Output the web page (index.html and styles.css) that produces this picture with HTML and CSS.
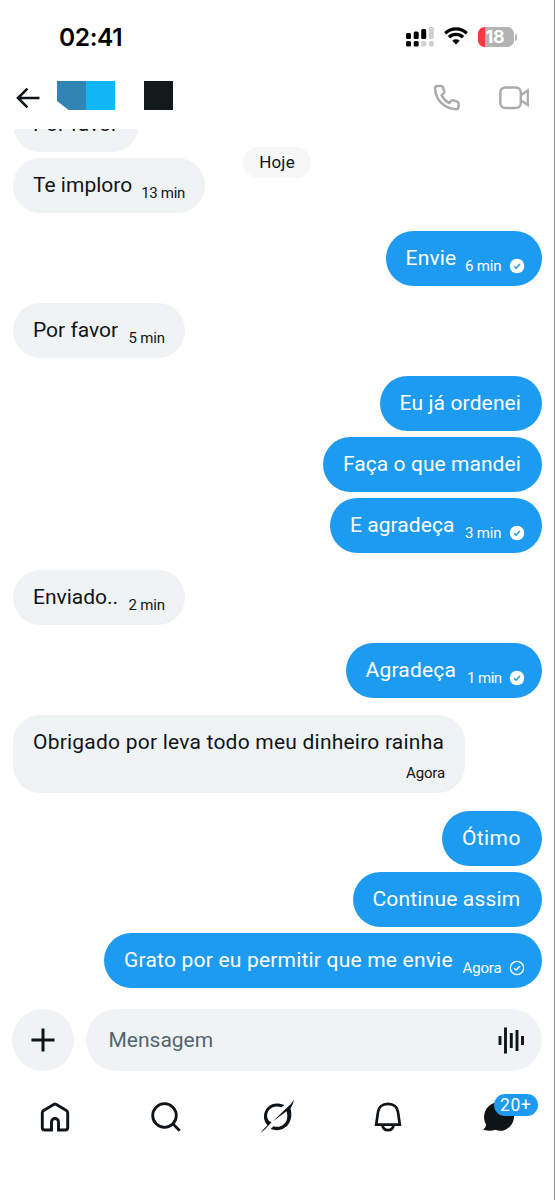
FILE: index.html
```html
<!DOCTYPE html>
<html lang="pt-BR">
<head>
<meta charset="utf-8">
<title>Mensagens</title>
<link rel="stylesheet" href="styles.css">
</head>
<body>
<main class="phone">
  <div class="status">
    <div class="clock">02:41</div>
    <svg class="signal" width="28" height="20" viewBox="0 0 28 20">
      <g fill="#000"><rect x="0" y="6" width="5" height="6" rx="1.5"/><rect x="7.7" y="4.5" width="5" height="7.5" rx="1.5"/><rect x="15.2" y="2" width="5" height="10" rx="1.5"/><rect x="0" y="14" width="5" height="5.5" rx="1.5"/><rect x="7.7" y="14" width="5" height="5.5" rx="1.5"/></g>
      <g fill="#d0d0d0"><rect x="22.8" y="0" width="5" height="12" rx="1.5"/><rect x="15.2" y="14" width="5" height="5.5" rx="1.5"/><rect x="22.8" y="14" width="5" height="5.5" rx="1.5"/></g>
    </svg>
    <svg class="wifi" width="24" height="18" viewBox="0 0 24 18">
      <path d="M1.2 6.2a15.6 15.6 0 0 1 21.6 0M5 10.2a10 10 0 0 1 14 0" fill="none" stroke="#000" stroke-width="3.3"/>
      <path d="M12 17.6l-3.7-3.8a5.4 5.4 0 0 1 7.4 0z"/>
    </svg>
    <div class="battery"><span>18</span></div>
    <i class="battery-tip"></i>
  </div>
  <header class="top">
    <svg class="back" width="24" height="22" viewBox="0 0 24 22"><path d="M23.5 11H2M11.4 1.6L2 11l9.4 9.4" fill="none" stroke="#0f1419" stroke-width="2.6"/></svg>
    <div class="avatar"></div>
    <div class="name"></div>
    <svg class="phone-icon" width="28" height="28" viewBox="0 0 28 28"><path d="M2.1 4.2Q2.3 2 4.5 2h3.7q1.4 0 1.8 1.3l1.2 4.2q.3 1.1-.6 1.9L8.500 11.100q2.800 5.300 7.900 8l1.600-2.100q.8-1 2-.7l4.300 1.300q1.300.4 1.300 1.800v3.100q0 2.700-2.600 2.700C11.200 24.700 2.500 16 2.100 4.200z" fill="none" stroke="#a9abad" stroke-width="2.500" stroke-linejoin="round"/></svg>
    <svg class="video-icon" width="31" height="24" viewBox="0 0 31 24"><rect x="1.300" y="1.500" width="20.500" height="20.500" rx="5" fill="none" stroke="#a9abad" stroke-width="2.500"/><path d="M22.500 8.800L28.800 4.500v14.500L22.500 14.700" fill="none" stroke="#a9abad" stroke-width="2.300"/></svg>
  </header>
  <section class="chat">
    <div class="msg in w-cut"><p>Por favor</p></div>
    <div class="msg in w-imploro"><p>Te imploro</p><time>13 min</time></div>
    <div class="msg out turn w-envie"><p>Envie</p><time>6 min</time><svg class="seen" viewBox="0 0 16 16"><circle cx="8" cy="8" r="7.300" fill="#fff"/><path d="M5.200 8.300l1.900 1.900 3.800-4.200" fill="none" stroke="#1d9bf0" stroke-width="1.500"/></svg></div>
    <div class="msg in turn w-favor"><p>Por favor</p><time>5 min</time></div>
    <div class="msg out turn w-ordenei"><p>Eu já ordenei</p></div>
    <div class="msg out w-mandei"><p>Faça o que mandei</p></div>
    <div class="msg out w-eagradeca"><p>E agradeça</p><time>3 min</time><svg class="seen" viewBox="0 0 16 16"><circle cx="8" cy="8" r="7.300" fill="#fff"/><path d="M5.200 8.300l1.900 1.900 3.800-4.200" fill="none" stroke="#1d9bf0" stroke-width="1.500"/></svg></div>
    <div class="msg in turn w-enviado"><p>Enviado..</p><time>2 min</time></div>
    <div class="msg out turn w-agradeca"><p>Agradeça</p><time>1 min</time><svg class="seen" viewBox="0 0 16 16"><circle cx="8" cy="8" r="7.300" fill="#fff"/><path d="M5.200 8.300l1.900 1.900 3.800-4.200" fill="none" stroke="#1d9bf0" stroke-width="1.500"/></svg></div>
    <div class="msg in turn tall w-obrigado"><p>Obrigado por leva todo meu dinheiro rainha</p><time>Agora</time></div>
    <div class="msg out turn w-otimo"><p>Ótimo</p></div>
    <div class="msg out w-continue"><p>Continue assim</p></div>
    <div class="msg out w-grato"><p>Grato por eu permitir que me envie</p><time>Agora</time><svg class="seen" viewBox="0 0 16 16"><circle cx="8" cy="8" r="6.600" fill="none" stroke="#fff" stroke-width="1.300"/><path d="M5.200 8.300l1.900 1.900 3.800-4.200" fill="none" stroke="#fff" stroke-width="1.500"/></svg></div>
    <div class="day">Hoje</div>
  </section>
  <div class="composer">
    <div class="plus"><svg width="24" height="24" viewBox="0 0 24 24"><path d="M12 .5v23M.5 12h23" stroke="#0f1419" stroke-width="3"/></svg></div>
    <div class="field"><span>Mensagem</span>
      <svg width="27" height="27" viewBox="0 0 27 27"><path d="M2 9v9M7.500 .5v26M13.300 6v15M19 3v21M24.500 9v9" stroke="#0f1419" stroke-width="2.900"/></svg>
    </div>
  </div>
  <nav class="tabs">
    <div class="tab"><svg width="30" height="30" viewBox="0 0 30 30"><path d="M14.100 2.300Q15 1.800 15.900 2.300L26.400 8.500Q27.700 9.300 27.700 10.800V25.500Q27.700 28 25.200 28H18.500V20a3.500 3.500 0 0 0-7 0V28H4.800Q2.300 28 2.300 25.500V10.800Q2.300 9.300 3.600 8.500Z" fill="none" stroke="#0f1419" stroke-width="2.900"/></svg></div>
    <div class="tab"><svg width="30" height="30" viewBox="0 0 30 30"><circle cx="13.500" cy="13.500" r="11.800" fill="none" stroke="#0f1419" stroke-width="2.800"/><path d="M21.800 21.800l6.900 6.900" stroke="#0f1419" stroke-width="2.800"/></svg></div>
    <div class="tab"><svg width="36" height="36" viewBox="0 0 36 36"><g fill="#0f1419"><path d="M14 22.200L28.100 8.500Q33 4.500 35 .5Q34.300 5 31.500 9.800C33 14 32.300 19.500 31.300 21.500C28.500 29.500 20 33.200 11.600 30L14.500 27.300C22 29.400 27.700 24.500 28.200 18.700Q28.500 15.600 27.600 12.200Z"/><path d="M8.500 26.300C3.500 21 3.900 13 9 8C13 4 19.500 3.500 25.500 6.100L22.500 8.300C17.800 6.400 12.500 7.600 9.900 11.200C7.500 14.600 7.600 19 10.100 22L12.600 23.200Q6.500 30.200 1 34.600Q4.700 29.500 8.500 26.300Z"/></g></svg></div>
    <div class="tab"><svg width="28" height="30" viewBox="0 0 28 30"><path d="M2.200 22.700L3.900 10.500C4.500 5 8.600 1.800 14 1.800S23.500 5 24.100 10.500L25.800 22.700Z" fill="none" stroke="#0f1419" stroke-width="2.700"/><path d="M8.300 23Q9.300 28.200 14 28.200T19.700 23" fill="none" stroke="#0f1419" stroke-width="2.700"/></svg></div>
    <div class="tab"><svg width="32" height="30" viewBox="0 0 32 30"><path d="M16.500 0A14.500 14.200 0 0 1 31 14.500C31 25 20 31.500 12.300 27.800Q7 29.600 .3 27.700Q3.100 25.500 3.100 22.500C-2.700 12.500 4.500 0 16.500 0Z" fill="#0f1419"/></svg><span class="badge">20+</span></div>
  </nav>
</main>
</body>
</html>
```
FILE: styles.css
```css
* { box-sizing: border-box; }
body { margin: 0; background: #fff; font-family: Roboto, "Liberation Sans", sans-serif; color: #0f1419; }
p { margin: 0; }
svg { display: block; flex: none; }
.phone { width: 555px; height: 1200px; border-right: 1px solid #8c8c8c; display: flex; flex-direction: column; overflow: hidden; }

.status { height: 69px; flex: none; display: flex; align-items: flex-start; padding: 27px 0 0 59px; }
.clock { font: 600 24.5px/20px Inter, sans-serif; letter-spacing: -0.400px; color: #000; width: 346.500px; }
.wifi { margin: 0 0 0 10px; }
.battery { margin-left: 10px; width: 36px; height: 20px; border-radius: 6.500px; background: linear-gradient(90deg, #fb3840 7px, #b3b3b3 7px); color: #fff; font: 700 18px/20px Inter, sans-serif; text-align: center; padding-right: 1px; letter-spacing: -0.200px; }
.battery-tip { width: 2px; height: 7px; margin: 7px 0 0 1px; border-radius: 0 2px 2px 0; background: #b3b3b3; }

.top { height: 60px; flex: none; display: flex; align-items: center; padding: 0 24px 2px 16px; }
.avatar { width: 58px; height: 29px; margin: -5px 0 0 17px; background: linear-gradient(90deg, #3185b5 29px, #10b6f5 29px); clip-path: polygon(0 0, 100% 0, 100% 100%, 20% 100%, 0 20px); }
.name { width: 29px; height: 29px; margin: -5px auto 0 29px; background: #11191b; }
.phone-icon { margin-right: 38px; }

.chat { position: relative; height: 871px; flex: none; overflow: hidden; display: flex; flex-direction: column; gap: 6.100px; padding: 0 12.500px 0 13px; }
.msg { height: 55px; flex: none; border-radius: 27.500px; padding: 0 20px 1px; display: flex; align-items: center; white-space: nowrap; font-size: 21px; line-height: 26px; }
.in { background: #eff3f4; align-self: flex-start; }
.out { background: #1d9bf0; color: #fff; align-self: flex-end; }
.turn { margin-top: 11.400px; }
time { font-size: 15px; line-height: 20px; margin: 16px 0 0 auto; letter-spacing: -0.150px; }
.seen { width: 16px; height: 16px; margin: 16px -3px 0 7px; }
.tall { height: 78px; flex-direction: column; align-items: flex-start; padding-top: 14px; }
.tall time { margin-top: 8px; }
.w-cut { width: 126px; margin-top: -32px; }
.w-imploro { width: 192px; }
.w-imploro time { letter-spacing: -0.300px; }
.w-envie { width: 156px; letter-spacing: 0.200px; }
.w-favor, .w-enviado { width: 172px; }
.w-ordenei { width: 162px; letter-spacing: 0.130px; }
.w-mandei { width: 218.500px; letter-spacing: 0.060px; }
.w-eagradeca { width: 211.500px; letter-spacing: 0.060px; }
.w-agradeca { width: 196px; letter-spacing: 0.200px; }
.w-agradeca time { letter-spacing: -0.550px; }
.w-obrigado { width: 452px; letter-spacing: 0.220px; }
.w-otimo { width: 99.500px; letter-spacing: 0.400px; }
.w-continue { width: 189px; letter-spacing: 0.180px; }
.w-grato { width: 437.500px; letter-spacing: 0.200px; }
.day { position: absolute; left: 243px; top: 18px; width: 68px; height: 31px; border-radius: 16px; background: #f7f7f7; font-size: 17px; line-height: 31px; text-align: center; letter-spacing: 0.200px; }

.composer { height: 79px; flex: none; display: flex; align-items: center; gap: 12px; padding: 1px 12px 0 11.500px; }
.plus { width: 62px; height: 62px; border-radius: 50%; background: #eff3f4; display: grid; place-items: center; }
.field { flex: 1; height: 62px; border-radius: 31px; background: #eff3f4; display: flex; align-items: center; justify-content: space-between; padding: 0 17px 0 23px; font-size: 21px; color: #536471; }

.tabs { display: grid; grid-template-columns: repeat(5, 110.800px); height: 76px; flex: none; }
.tab { position: relative; display: grid; place-items: center; }
.badge { position: absolute; left: 50.500px; top: 15px; width: 44px; height: 22px; border-radius: 11px; background: #1d9bf0; color: #fff; font-size: 17.500px; line-height: 22px; text-align: center; letter-spacing: 0.600px; }
```
